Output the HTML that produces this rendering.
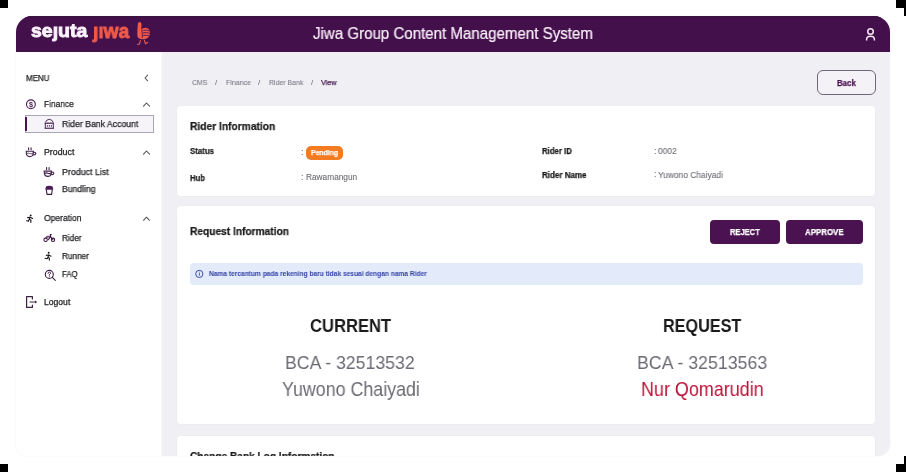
<!DOCTYPE html>
<html><head><meta charset="utf-8">
<style>
html,body{margin:0;padding:0;}
body{width:906px;height:472px;overflow:hidden;background:#fff;position:relative;font-family:"Liberation Sans",sans-serif;}
.blk{position:absolute;background:#000;}
#frame{position:absolute;left:16px;top:16px;width:874px;height:439.5px;border-radius:16px 16px 12px 12px;overflow:hidden;box-shadow:0 0 3px rgba(60,20,60,0.05);}
#L{position:absolute;left:-16px;top:-16px;width:906px;height:472px;}
.a{position:absolute;}
.t{position:absolute;white-space:nowrap;line-height:1;transform-origin:0 0;-webkit-text-stroke:0.25px currentColor;will-change:transform;}
svg{position:absolute;overflow:visible;}
</style></head><body>
<div class="blk" style="left:0;top:0;width:8px;height:8px"></div>
<div class="blk" style="left:896px;top:0;width:10px;height:8px"></div>
<div class="blk" style="left:904px;top:8px;width:2px;height:8px"></div>
<div class="blk" style="left:0;top:464px;width:8px;height:8px"></div>
<div class="blk" style="left:904px;top:456px;width:2px;height:8px"></div>
<div class="blk" style="left:896px;top:464px;width:10px;height:8px"></div>
<div id="frame"><div id="L">
 <div class="a" style="left:16px;top:16px;width:874px;height:36px;background:#44104B"></div>
 <div class="a" style="left:16px;top:16px;width:874px;height:1.5px;background:#3C1242"></div>
 <div class="a" style="left:16px;top:52px;width:146.5px;height:404px;background:#fff"></div>
 <div class="a" style="left:162.5px;top:52px;width:727.5px;height:404px;background:#F0EFF4"></div>
 <div class="a" style="left:160.5px;top:52px;width:2px;height:404px;background:#F4F4F6"></div>
 <!-- back button -->
 <div class="a" style="left:817px;top:70px;width:57px;height:23px;border:1px solid #6F6875;border-radius:6px;background:#F5F2F7"></div>
 <!-- cards -->
 <div class="a" style="left:177.3px;top:106.4px;width:697.7px;height:89.3px;background:#fff;border-radius:4px;box-shadow:0 0 2px rgba(40,20,60,0.05)"></div>
 <div class="a" style="left:177.3px;top:206px;width:697.7px;height:218.2px;background:#fff;border-radius:4px;box-shadow:0 0 2px rgba(40,20,60,0.05)"></div>
 <div class="a" style="left:177.3px;top:436.3px;width:697.7px;height:60px;background:#fff;border-radius:4px;box-shadow:0 0 2px rgba(40,20,60,0.05)"></div>
 <!-- badge -->
 <div class="a" style="left:305.6px;top:145.8px;width:37.6px;height:14.3px;background:#F47B20;border-radius:5px"></div>
 <!-- buttons -->
 <div class="a" style="left:710px;top:220px;width:69.5px;height:24px;background:#4A1250;border-radius:4px"></div>
 <div class="a" style="left:785.6px;top:220px;width:77.7px;height:24px;background:#4A1250;border-radius:4px"></div>
 <!-- banner -->
 <div class="a" style="left:189.6px;top:262.9px;width:673.7px;height:22.3px;background:#E3EBFA;border-radius:4px"></div>
 <!-- active menu -->
 <div class="a" style="left:25px;top:115.4px;width:126.8px;height:15.5px;border:1px solid #ABA6B4;background:#F6F4F9"></div>
 <div class="a" style="left:25px;top:116.5px;width:2px;height:14px;background:#4A1250"></div>
<svg width="906" height="472" viewBox="0 0 906 472" style="left:0;top:0;will-change:transform">
 <!-- logo hand -->
 <g fill="#EF5B4B">
  <path d="M137.9 23.6 Q138.3 21.8 139.9 21.9 Q141.5 22.1 141.5 24 L141.3 29.6 Q143.2 27.6 145.8 27.8 Q149.8 28.3 150 32.6 Q150.1 36.9 146.6 38.4 Q143.6 39.6 140.6 39.1 Q137.4 38.4 137.3 35 Q137.2 30 137.9 23.6 Z"/>
 </g>
 <g stroke="#47114F" stroke-width="0.85" fill="none" stroke-linecap="round">
  <path d="M141.9 29.9 Q142.6 33.6 142.3 37.6"/>
  <path d="M143.6 30.3 Q146.6 29.3 149.2 30.9"/>
  <path d="M143.4 32.8 Q146.8 32 149.8 33.3"/>
  <path d="M143.6 35.4 Q146.8 34.8 149.4 35.9"/>
 </g>
 <g stroke="#EF5B4B" stroke-width="1.1" fill="none" stroke-linecap="round">
  <path d="M140.4 40.6 L139.4 44 L137.6 44.4"/>
  <path d="M144.4 40.4 L145.4 43.6 L147.6 42.4"/>
 </g>
 <!-- user icon -->
 <g stroke="#F6E6F6" stroke-width="1.5" fill="none">
  <circle cx="870.5" cy="31.5" r="2.75"/>
  <path d="M866.6 40.6 L866.6 39.4 Q866.6 36.2 870.5 36.2 Q874.4 36.2 874.4 39.4 L874.4 40.6"/>
 </g>
 <!-- chevrons -->
 <g stroke="#505058" stroke-width="1.05" fill="none" stroke-linecap="round" stroke-linejoin="round">
  <path d="M147.6 75.2 L145 78 L147.6 80.8"/>
  <path d="M143.5 106.1 L146.5 103 L149.5 106.1"/>
  <path d="M143.5 154.1 L146.5 151 L149.5 154.1"/>
  <path d="M143.5 220.3 L146.5 217.2 L149.5 220.3"/>
 </g>
 <!-- finance $ -->
 <g stroke="#4A1A55" fill="none">
  <circle cx="30.9" cy="104.3" r="4.4" stroke-width="1.1"/>
 </g>
 <text x="30.9" y="107.1" font-family="Liberation Sans" font-weight="700" font-size="7.2" fill="#4A1A55" text-anchor="middle">$</text>
 <!-- bank icon -->
 <g fill="none" stroke="#45204F" stroke-width="0.95" stroke-linecap="round">
  <path d="M45.6 121.9 Q46.6 119.4 49.3 119.3 Q52 119.4 53 121.9"/>
  <path d="M45.3 123.4 L45.3 128.1 M53.3 123.4 L53.3 128.1"/>
 </g>
 <g fill="#45204F">
  <rect x="44.7" y="122.6" width="9.2" height="1.2"/>
  <rect x="44.7" y="127.7" width="9.2" height="1.1"/>
  <rect x="46.9" y="125" width="0.8" height="1.8"/>
  <rect x="48.9" y="125" width="0.8" height="1.8"/>
  <rect x="50.9" y="125" width="0.8" height="1.8"/>
 </g>
 <!-- product cup icons -->
 <g id="cup1" fill="none" stroke="#40234A" stroke-width="1.1" stroke-linecap="round">
  <path d="M28.6 147.8 L28.6 149.8 M31.1 147.8 L31.1 149.8"/>
  <path d="M26.2 151.3 L33.4 151.3 L33.2 154 Q32.6 156.6 29.8 156.6 Q26.9 156.6 26.4 154 Z"/>
  <path d="M33.4 152.3 Q35.8 152.1 35.8 153.6 Q35.6 155 33 155"/>
  <path d="M26.6 153.6 Q28.4 152.6 29.8 153.5 Q31.3 154.3 33.1 153.2" stroke-width="0.8"/>
 </g>
 <g fill="none" stroke="#40234A" stroke-width="1.1" stroke-linecap="round">
  <path d="M46.6 167.6 L46.6 169.6 M49.1 167.6 L49.1 169.6"/>
  <path d="M44.2 171.1 L51.4 171.1 L51.2 173.8 Q50.6 176.4 47.8 176.4 Q44.9 176.4 44.4 173.8 Z"/>
  <path d="M51.4 172.1 Q53.8 171.9 53.8 173.4 Q53.6 174.8 51 174.8"/>
  <path d="M44.6 173.4 Q46.4 172.4 47.8 173.3 Q49.3 174.1 51.1 173"/>
 </g>
 <!-- bundling -->
 <g fill="#4A1A55">
  <path d="M46 186.4 Q49.3 185.2 52.6 186.4 L53.4 189.8 L45.2 189.8 Z"/>
 </g>
 <path d="M46.3 189.6 L47 194.4 L51.6 194.4 L52.3 189.6" fill="none" stroke="#3A1A40" stroke-width="1.1" stroke-linejoin="round"/>
 <!-- runners -->
 <g fill="none" stroke="#1E1420" stroke-width="1.1" stroke-linecap="round" stroke-linejoin="round">
  <path d="M27.6 217.6 L30 217.2 L32.5 218.4"/>
  <path d="M30 217.3 L29.2 219.3 L31 220.3 L30.8 222.4"/>
  <path d="M29.2 219.4 L28.4 221.2 L26.6 220.7"/>
 </g>
 <circle cx="30.7" cy="215.4" r="0.95" fill="#1E1420"/>
 <g fill="none" stroke="#1E1420" stroke-width="1.1" stroke-linecap="round" stroke-linejoin="round">
  <path d="M46.4 255.4 L48.6 255 L51 256.2"/>
  <path d="M48.6 255.1 L48 257.3 L49.4 258.2 L49.3 260.1"/>
  <path d="M48 257.4 L47.1 258.7 L45 258.3"/>
 </g>
 <circle cx="48.7" cy="252.7" r="0.95" fill="#1E1420"/>
 <!-- bike -->
 <g fill="none" stroke="#3A1640" stroke-width="1.05" stroke-linecap="round" stroke-linejoin="round">
  <circle cx="45.6" cy="239.8" r="1.7"/>
  <circle cx="53" cy="239.8" r="1.7"/>
  <path d="M46.6 237.3 L50.6 236.6 L53 239.8 M48.3 239.8 L50.6 236.6 L50.3 234.6 L51.3 234.6"/>
 </g>
 <path d="M45.5 237.8 L47.2 236.3 L50 236.4" stroke="#7A4A85" stroke-width="1.2" fill="none"/>
 <!-- faq -->
 <g fill="none" stroke="#3A1A45" stroke-width="1.1" stroke-linecap="round">
  <circle cx="49.3" cy="274.4" r="4"/>
  <path d="M52.3 277.4 L55.3 280.4"/>
  <path d="M48.1 273.4 Q48.2 272.1 49.4 272.1 Q50.7 272.2 50.6 273.3 Q50.5 274.1 49.4 274.6 L49.3 275.3" stroke-width="0.9"/>
 </g>
 <circle cx="49.3" cy="276.6" r="0.5" fill="#3A1A45"/>
 <!-- logout -->
 <g fill="none" stroke="#3A2242" stroke-width="1.2" stroke-linecap="round" stroke-linejoin="round">
  <path d="M32.4 299 L32.4 296.7 L26.6 296.7 L26.6 307.4 L32.4 307.4 L32.4 305"/>
  <path d="M30 302 L35.8 302"/>
 </g>
 <path d="M35 300.4 L37 302 L35 303.6 Z" fill="#3A2242"/>
 <!-- info icon -->
 <circle cx="199.3" cy="273.9" r="3.6" fill="none" stroke="#3545A6" stroke-width="0.95"/>
 <rect x="198.9" y="273.1" width="0.85" height="2.6" fill="#3545A6"/>
 <circle cx="199.32" cy="272" r="0.5" fill="#3545A6"/>
</svg>

<div class="t" style="left:313.00px;top:26.41px;font-size:15.70px;font-weight:400;color:#FAF0FA;transform:scaleX(0.9608);-webkit-text-stroke:0.2px #FAF0FA;">Jiwa Group Content Management System</div>
<div class="t" style="left:30.80px;top:22.03px;font-size:18.74px;font-weight:700;color:#FBF3FB;transform:scaleX(1.0397);-webkit-text-stroke:0.9px #FBF3FB;">seȷuta</div>
<div class="t" style="left:92.78px;top:20.77px;font-size:20.82px;font-weight:700;color:#EF5B4B;transform:scaleX(0.9206);-webkit-text-stroke:0.9px #EF5B4B;">ȷıwa</div>
<div class="t" style="left:25.50px;top:73.84px;font-size:8.58px;font-weight:400;color:#1E1E22;transform:scaleX(0.9300);">MENU</div>
<div class="t" style="left:43.80px;top:99.98px;font-size:9.00px;font-weight:400;color:#1E1E22;transform:scaleX(0.9300);">Finance</div>
<div class="t" style="left:61.70px;top:119.87px;font-size:9.36px;font-weight:400;color:#1E1E22;transform:scaleX(0.9300);">Rider Bank Account</div>
<div class="t" style="left:43.60px;top:148.24px;font-size:8.58px;font-weight:400;color:#1E1E22;transform:scaleX(1.0256);">Product</div>
<div class="t" style="left:61.80px;top:167.57px;font-size:9.01px;font-weight:400;color:#1E1E22;transform:scaleX(0.9836);">Product List</div>
<div class="t" style="left:61.80px;top:185.37px;font-size:9.01px;font-weight:400;color:#1E1E22;transform:scaleX(0.9556);">Bundling</div>
<div class="t" style="left:43.70px;top:214.27px;font-size:9.01px;font-weight:400;color:#1E1E22;transform:scaleX(0.9479);">Operation</div>
<div class="t" style="left:61.60px;top:233.53px;font-size:8.82px;font-weight:400;color:#1E1E22;transform:scaleX(0.9300);">Rider</div>
<div class="t" style="left:61.60px;top:251.93px;font-size:8.82px;font-weight:400;color:#1E1E22;transform:scaleX(0.9300);">Runner</div>
<div class="t" style="left:61.60px;top:270.24px;font-size:8.33px;font-weight:400;color:#1E1E22;transform:scaleX(0.9300);">FAQ</div>
<div class="t" style="left:43.70px;top:297.66px;font-size:8.43px;font-weight:400;color:#1E1E22;transform:scaleX(1.0195);">Logout</div>
<div class="t" style="left:192.00px;top:78.94px;font-size:8.10px;font-weight:400;color:#7C7A86;transform:scaleX(0.8564);-webkit-text-stroke:0.1px currentColor;">CMS</div>
<div class="t" style="left:215.40px;top:79.20px;font-size:7.80px;font-weight:400;color:#7C7A86;-webkit-text-stroke:0.1px currentColor;">/</div>
<div class="t" style="left:225.60px;top:78.94px;font-size:8.10px;font-weight:400;color:#7C7A86;transform:scaleX(0.8704);-webkit-text-stroke:0.1px currentColor;">Finance</div>
<div class="t" style="left:258.30px;top:79.20px;font-size:7.80px;font-weight:400;color:#7C7A86;-webkit-text-stroke:0.1px currentColor;">/</div>
<div class="t" style="left:268.60px;top:78.94px;font-size:8.10px;font-weight:400;color:#7C7A86;transform:scaleX(0.8580);-webkit-text-stroke:0.1px currentColor;">Rider Bank</div>
<div class="t" style="left:310.80px;top:79.20px;font-size:7.80px;font-weight:400;color:#7C7A86;-webkit-text-stroke:0.1px currentColor;">/</div>
<div class="t" style="left:321.40px;top:78.94px;font-size:8.10px;font-weight:400;color:#44184F;transform:scaleX(0.8958);">View</div>
<div class="t" style="left:836.90px;top:78.56px;font-size:8.43px;font-weight:700;color:#4A1250;transform:scaleX(0.9311);">Back</div>
<div class="t" style="left:189.70px;top:120.85px;font-size:11.05px;font-weight:700;color:#1A1A1A;transform:scaleX(0.9264);">Rider Information</div>
<div class="t" style="left:189.80px;top:147.30px;font-size:8.86px;font-weight:700;color:#1A1A1A;transform:scaleX(0.8900);">Status</div>
<div class="t" style="left:189.80px;top:174.21px;font-size:8.61px;font-weight:700;color:#1A1A1A;transform:scaleX(0.8900);">Hub</div>
<div class="t" style="left:301.10px;top:147.98px;font-size:9.00px;font-weight:400;color:#6E6E76;-webkit-text-stroke:0.1px currentColor;">:</div>
<div class="t" style="left:311.10px;top:149.42px;font-size:7.41px;font-weight:700;color:#FFFFFF;transform:scaleX(0.9267);">Pending</div>
<div class="t" style="left:301.10px;top:173.48px;font-size:9.00px;font-weight:400;color:#6E6E76;-webkit-text-stroke:0.1px currentColor;">:</div>
<div class="t" style="left:306.40px;top:174.21px;font-size:8.14px;font-weight:400;color:#6E6E76;transform:scaleX(1.0215);-webkit-text-stroke:0.1px currentColor;">Rawamangun</div>
<div class="t" style="left:541.60px;top:147.21px;font-size:8.73px;font-weight:700;color:#1A1A1A;transform:scaleX(0.8900);">Rider ID</div>
<div class="t" style="left:653.80px;top:146.98px;font-size:9.00px;font-weight:400;color:#6E6E76;-webkit-text-stroke:0.1px currentColor;">:</div>
<div class="t" style="left:658.20px;top:146.97px;font-size:9.01px;font-weight:400;color:#6E6E76;transform:scaleX(0.9376);-webkit-text-stroke:0.1px currentColor;">0002</div>
<div class="t" style="left:541.60px;top:170.62px;font-size:8.72px;font-weight:700;color:#1A1A1A;transform:scaleX(0.9198);">Rider Name</div>
<div class="t" style="left:653.80px;top:170.38px;font-size:9.00px;font-weight:400;color:#6E6E76;-webkit-text-stroke:0.1px currentColor;">:</div>
<div class="t" style="left:658.20px;top:170.62px;font-size:8.72px;font-weight:400;color:#6E6E76;transform:scaleX(0.9627);-webkit-text-stroke:0.1px currentColor;">Yuwono Chaiyadi</div>
<div class="t" style="left:190.00px;top:226.49px;font-size:10.76px;font-weight:700;color:#1A1A1A;transform:scaleX(0.9464);">Request Information</div>
<div class="t" style="left:729.70px;top:228.08px;font-size:8.76px;font-weight:700;color:#FFFFFF;transform:scaleX(0.8619);">REJECT</div>
<div class="t" style="left:805.20px;top:227.97px;font-size:8.89px;font-weight:700;color:#FFFFFF;transform:scaleX(0.8900);">APPROVE</div>
<div class="t" style="left:208.50px;top:270.76px;font-size:6.90px;font-weight:700;color:#3142A6;transform:scaleX(0.9608);-webkit-text-stroke:0;">Nama tercantum pada rekening baru tidak sesuai dengan nama Rider</div>
<div class="t" style="left:309.60px;top:317.37px;font-size:18.46px;font-weight:700;color:#1A1A1A;transform:scaleX(0.9007);-webkit-text-stroke:0;">CURRENT</div>
<div class="t" style="left:285.40px;top:352.85px;font-size:19.19px;font-weight:400;color:#6B6B75;transform:scaleX(0.9203);-webkit-text-stroke:0;">BCA - 32513532</div>
<div class="t" style="left:281.60px;top:379.51px;font-size:19.48px;font-weight:400;color:#6B6B75;transform:scaleX(0.9166);-webkit-text-stroke:0;">Yuwono Chaiyadi</div>
<div class="t" style="left:662.90px;top:317.37px;font-size:18.46px;font-weight:700;color:#1A1A1A;transform:scaleX(0.8795);-webkit-text-stroke:0;">REQUEST</div>
<div class="t" style="left:637.40px;top:352.85px;font-size:19.19px;font-weight:400;color:#6B6B75;transform:scaleX(0.9245);-webkit-text-stroke:0;">BCA - 32513563</div>
<div class="t" style="left:641.00px;top:379.51px;font-size:19.48px;font-weight:400;color:#BE1239;transform:scaleX(0.9217);-webkit-text-stroke:0;">Nur Qomarudin</div>
<div class="t" style="left:189.80px;top:450.77px;font-size:10.90px;font-weight:700;color:#1A1A1A;transform:scaleX(0.9295);">Change Bank Log Information</div>
</div></div>
</body></html>
